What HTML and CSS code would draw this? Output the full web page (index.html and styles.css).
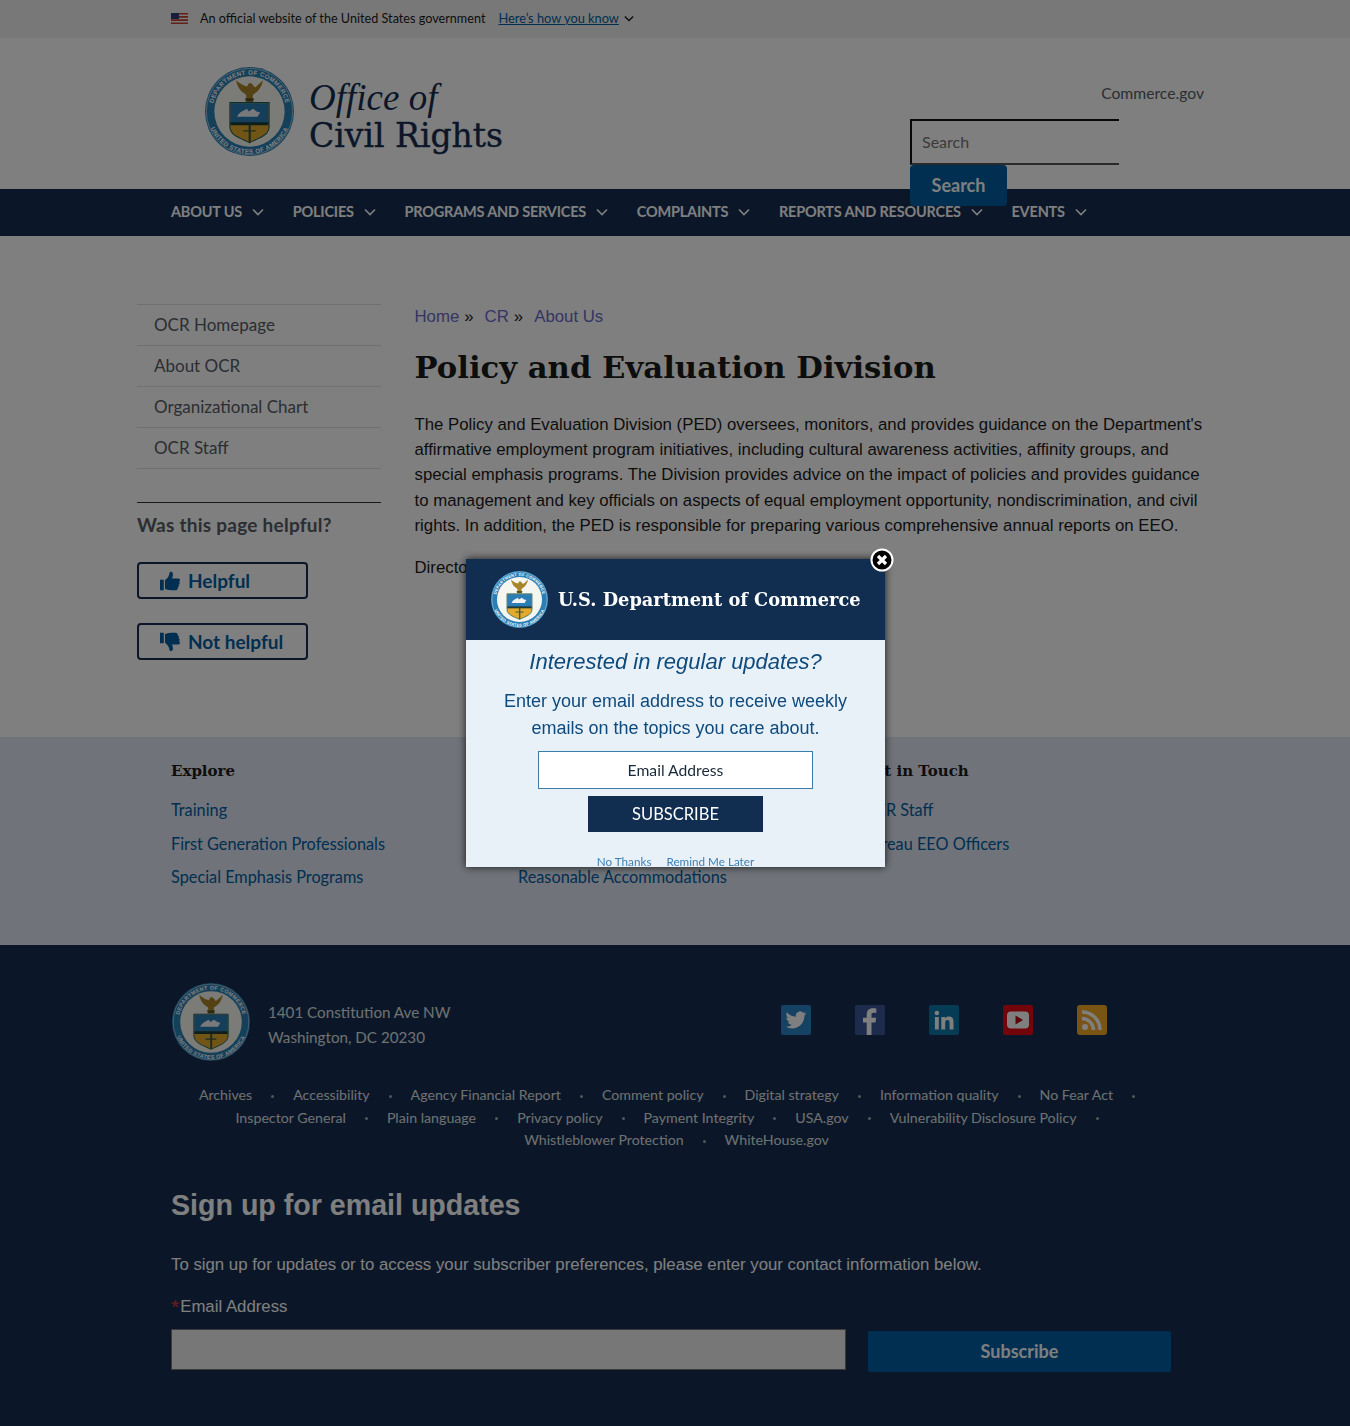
FILE: index.html
```html
<!DOCTYPE html>
<html lang="en">
<head>
    <meta charset="UTF-8">
    <meta name="viewport" content="width=device-width, initial-scale=1.0">
    <title>Policy and Evaluation Division | Office of Civil Rights</title>
    <link rel="stylesheet" href="styles.css">
</head>
<body>

<svg class="defs" width="0" height="0" aria-hidden="true">
    <defs>
        <path id="arc-top" d="M8.500 50a41.500 41.500 0 0 1 83 0"/>
        <path id="arc-bottom" d="M2.500 50a47.500 47.500 0 0 0 95 0"/>
    </defs>
    <symbol id="seal" viewBox="0 0 100 100">
        <circle cx="50" cy="50" r="50" fill="#2a80b5"/>
        <circle cx="50" cy="50" r="48.500" fill="none" stroke="#fff" stroke-width=".6"/>
        <circle cx="50" cy="50" r="39.500" fill="#f6f6f1"/>
        <path d="M35 15c1 7 5 13 11 16l1 7h6l1-7c6-3 10-9 11-16-4 4-7 7-9 8-1-2-3-4-5-5-2 0-3 2-3.500 4C43 21 39 19 35 15z" fill="#a8852a"/>
        <path d="M45 35h10l-1 4h-8z" fill="#5e4f1e"/>
        <path d="M28 40h44v27c0 10-12 13-22 18-10-5-22-8-22-18z" fill="#e3aa2e" stroke="#1e5f57" stroke-width="1.200"/>
        <path d="M28.600 40.600h42.800V64H28.600z" fill="#2a7db5"/>
        <path d="M36 56c3-6 8-7 11-9l2 3 5-3 4 3 4 1-3 5z" fill="#f1f3f4"/>
        <path d="M28.600 62h42.800v3.500H28.600z" fill="#1f3d36"/>
        <path d="M49 65h2.500v19H49zM43 71h14v1.600H43z" fill="#3c5a3a"/>
    </symbol>
    <symbol id="chevron" viewBox="0 0 12 8">
        <path d="M1 1.500 6 6.500l5-5" fill="none" stroke="currentColor" stroke-width="1.600"/>
    </symbol>
    <symbol id="thumb" viewBox="0 0 24 24">
        <path d="M0 10.500h4.500V23H0zM6 11c3-2 5-5 5.500-9 .2-1.500 3.800-1.500 4 1.500.1 2-.5 4-1 5.500H22c2.500 0 2.500 3.300.8 4 1.200 1 1 3-.5 3.500.7 1.200.3 2.800-1 3.200.3 1.500-.6 3.300-2.300 3.300h-6C10 23 8 22 6 21.500z" fill="currentColor"/>
    </symbol>
</svg>

<section class="gov-banner">
    <svg class="flag" viewBox="0 0 17 11" width="17" height="11">
        <rect width="17" height="11" fill="#f2f2f2"/>
        <path d="M0 0h17v1.600H0zM0 3.100h17v1.600H0zM0 6.300h17v1.600H0zM0 9.400h17V11H0z" fill="#c4402f"/>
        <rect width="8" height="6" fill="#2e3f7c"/>
    </svg>
    <span class="gov-text">An official website of the United States government</span>
    <a class="gov-link" href="#">Here’s how you know</a>
    <svg class="gov-chevron"><use href="#chevron"/></svg>
</section>

<header class="site-header">
    <a class="logo" href="#">
        <svg class="logo-seal" viewBox="0 0 100 100">
            <use href="#seal" width="100" height="100"/>
            <text class="seal-text"><textPath href="#arc-top" startOffset="50%" text-anchor="middle">DEPARTMENT OF COMMERCE</textPath></text>
            <text class="seal-text"><textPath href="#arc-bottom" startOffset="50%" text-anchor="middle">UNITED STATES OF AMERICA</textPath></text>
        </svg>
        <span class="logo-name"><em>Office of</em><br>Civil Rights</span>
    </a>
    <div class="header-right">
        <a class="commerce-link" href="#">Commerce.gov</a>
        <form class="search-form">
            <input class="search-input" type="text" placeholder="Search">
            <button class="search-btn" type="button">Search</button>
        </form>
    </div>
</header>

<nav class="main-nav">
    <a href="#">About Us <svg><use href="#chevron"/></svg></a>
    <a href="#">Policies <svg><use href="#chevron"/></svg></a>
    <a href="#">Programs and Services <svg><use href="#chevron"/></svg></a>
    <a href="#">Complaints <svg><use href="#chevron"/></svg></a>
    <a href="#">Reports and Resources <svg><use href="#chevron"/></svg></a>
    <a href="#">Events <svg><use href="#chevron"/></svg></a>
</nav>

<main class="page">
    <aside class="sidebar">
        <ul class="side-menu">
            <li><a href="#">OCR Homepage</a></li>
            <li><a href="#">About OCR</a></li>
            <li><a href="#">Organizational Chart</a></li>
            <li><a href="#">OCR Staff</a></li>
        </ul>
        <div class="helpful">
            <h2>Was this page helpful?</h2>
            <button type="button"><svg><use href="#thumb"/></svg>Helpful</button>
            <button type="button"><svg class="flip"><use href="#thumb"/></svg>Not helpful</button>
        </div>
    </aside>
    <article class="content">
        <div class="breadcrumb"><a href="#">Home</a><span>»</span><a href="#">CR</a><span>»</span><a href="#">About Us</a></div>
        <h1>Policy and Evaluation Division</h1>
        <p>The Policy and Evaluation Division (PED) oversees, monitors, and provides guidance on the Department's affirmative employment program initiatives, including cultural awareness activities, affinity groups, and special emphasis programs. The Division provides advice on the impact of policies and provides guidance to management and key officials on aspects of equal employment opportunity, nondiscrimination, and civil rights. In addition, the PED is responsible for preparing various comprehensive annual reports on EEO.</p>
        <p>Director</p>
    </article>
</main>

<section class="link-band">
    <div class="link-col">
        <h3>Explore</h3>
        <a href="#">Training</a>
        <a href="#">First Generation Professionals</a>
        <a href="#">Special Emphasis Programs</a>
    </div>
    <div class="link-col narrow">
        <h3>&nbsp;</h3>
        <a href="#">&nbsp;</a>
        <a href="#">&nbsp;</a>
        <a href="#">Reasonable Accommodations</a>
    </div>
    <div class="link-col">
        <h3>Get in Touch</h3>
        <a href="#">OCR Staff</a>
        <a href="#">Bureau EEO Officers</a>
    </div>
</section>

<footer class="site-footer">
    <div class="footer-top">
        <svg class="footer-seal" viewBox="0 0 100 100">
            <use href="#seal" width="100" height="100"/>
            <text class="seal-text"><textPath href="#arc-top" startOffset="50%" text-anchor="middle">DEPARTMENT OF COMMERCE</textPath></text>
            <text class="seal-text"><textPath href="#arc-bottom" startOffset="50%" text-anchor="middle">UNITED STATES OF AMERICA</textPath></text>
        </svg>
        <address>1401 Constitution Ave NW<br>Washington, DC 20230</address>
        <div class="social">
            <a href="#"><svg viewBox="0 0 30 30"><rect width="30" height="30" rx="2" fill="#2a82c7"/><path transform="translate(4.500 4.500) scale(.875)" fill="#fff" d="M23.953 4.570a10 10 0 0 1-2.825.775 4.958 4.958 0 0 0 2.163-2.723c-.951.555-2.005.959-3.127 1.184a4.920 4.920 0 0 0-8.384 4.482C7.690 8.095 4.067 6.130 1.640 3.162a4.822 4.822 0 0 0-.666 2.475c0 1.710.870 3.213 2.188 4.096a4.904 4.904 0 0 1-2.228-.616v.060a4.923 4.923 0 0 0 3.946 4.827 4.996 4.996 0 0 1-2.212.085 4.936 4.936 0 0 0 4.604 3.417 9.867 9.867 0 0 1-6.102 2.105c-.390 0-.779-.023-1.170-.067a13.995 13.995 0 0 0 7.557 2.209c9.053 0 13.998-7.496 13.998-13.985 0-.210 0-.420-.015-.630A9.935 9.935 0 0 0 24 4.590z"/></svg></a>
            <a href="#"><svg viewBox="0 0 30 30"><rect width="30" height="30" rx="2" fill="#3b5998"/><path fill="#fff" d="M16.500 30V17.500h4l.6-4.700h-4.600V10c0-1.400.4-2.300 2.300-2.300h2.500V3.500c-.4-.1-1.900-.2-3.600-.2-3.600 0-6 2.200-6 6.200v3.300H8v4.700h3.700V30z"/></svg></a>
            <a href="#"><svg viewBox="0 0 30 30"><rect width="30" height="30" rx="2" fill="#0b76a8"/><path transform="translate(2 2) scale(1.100)" fill="#fff" d="M20.447 20.452h-3.554v-5.569c0-1.328-.027-3.037-1.852-3.037-1.853 0-2.136 1.445-2.136 2.939v5.667H9.351V9h3.414v1.561h.046c.477-.9 1.637-1.850 3.370-1.850 3.601 0 4.267 2.370 4.267 5.455v6.286zM5.337 7.433a2.062 2.062 0 0 1-2.063-2.065 2.064 2.064 0 1 1 2.063 2.065zm1.782 13.019H3.555V9h3.564v11.452z"/></svg></a>
            <a href="#"><svg viewBox="0 0 30 30"><rect width="30" height="30" rx="2" fill="#e40a14"/><rect x="4" y="6.500" width="22" height="17" rx="4" fill="#fff"/><path d="M12.500 10.500v9l7.500-4.500z" fill="#b30f16"/></svg></a>
            <a href="#"><svg viewBox="0 0 30 30"><rect width="30" height="30" rx="3" fill="#f3ab29"/><circle cx="8" cy="22" r="3" fill="#fff"/><path d="M5 13.500a11.500 11.500 0 0 1 11.500 11.500M5 7a18 18 0 0 1 18 18" fill="none" stroke="#fff" stroke-width="3.400"/></svg></a>
        </div>
    </div>
    <div class="footer-links">
        <div class="link-row">
            <a href="#">Archives</a><a href="#">Accessibility</a><a href="#">Agency Financial Report</a><a href="#">Comment policy</a><a href="#">Digital strategy</a><a href="#">Information quality</a><a href="#">No Fear Act</a>
        </div>
        <div class="link-row">
            <a href="#">Inspector General</a><a href="#">Plain language</a><a href="#">Privacy policy</a><a href="#">Payment Integrity</a><a href="#">USA.gov</a><a href="#">Vulnerability Disclosure Policy</a>
        </div>
        <div class="link-row last">
            <a href="#">Whistleblower Protection</a><a href="#">WhiteHouse.gov</a>
        </div>
    </div>
    <div class="signup">
        <h2>Sign up for email updates</h2>
        <p>To sign up for updates or to access your subscriber preferences, please enter your contact information below.</p>
        <label for="signup-email"><span>*</span>Email Address</label>
        <div class="signup-row">
            <input id="signup-email" type="text">
            <button type="button">Subscribe</button>
        </div>
    </div>
</footer>

<div class="overlay"></div>
<div class="modal">
    <div class="modal-head">
        <svg class="modal-seal" viewBox="0 0 100 100">
            <use href="#seal" width="100" height="100"/>
            <text class="seal-text"><textPath href="#arc-top" startOffset="50%" text-anchor="middle">DEPARTMENT OF COMMERCE</textPath></text>
            <text class="seal-text"><textPath href="#arc-bottom" startOffset="50%" text-anchor="middle">UNITED STATES OF AMERICA</textPath></text>
        </svg>
        <span>U.S. Department of Commerce</span>
    </div>
    <div class="modal-body">
        <h2>Interested in regular updates?</h2>
        <p>Enter your email address to receive weekly emails on the topics you care about.</p>
        <input type="text" placeholder="Email Address">
        <button type="button">SUBSCRIBE</button>
        <div class="modal-links"><a href="#">No Thanks</a><a href="#">Remind Me Later</a></div>
    </div>
</div>
<button class="modal-close" type="button" aria-label="Close">
    <svg viewBox="0 0 24 24" width="24" height="24"><circle cx="12" cy="12" r="10.500" fill="#000" stroke="#fff" stroke-width="2"/><path d="M8 8l8 8M16 8l-8 8" stroke="#fff" stroke-width="3.200"/></svg>
</button>

</body>
</html>
```

FILE: styles.css
```css
* {
    box-sizing: border-box;
}

body {
    font-family: 'Lato', 'Noto Sans', sans-serif;
    color: #1b1b1b;
    background: #fff;
    margin: 0;
    min-height: 1426px;
}

a {
    text-decoration: none;
    color: inherit;
}

.defs {
    display: block;
    height: 0;
}

.seal-text {
    font-family: 'Liberation Sans', sans-serif;
    font-size: 7px;
    font-weight: bold;
    letter-spacing: 0.4px;
    fill: #fff;
}

/* gov banner */
.gov-banner {
    display: flex;
    align-items: center;
    height: 38px;
    padding: 0 0 2px 171px;
    background: #f0f0f0;
    font-size: 12.650px;
}

.gov-text {
    margin-left: 12px;
}

.gov-link {
    margin-left: 13px;
    font-size: 12.800px;
    color: #005ea2;
    text-decoration: underline;
}

.gov-chevron {
    width: 10px;
    height: 7px;
    margin-left: 5px;
    color: #1b1b1b;
}

/* header */
.site-header {
    display: flex;
    justify-content: space-between;
    height: 151px;
    padding: 29px 146px 0 205px;
}

.logo {
    display: flex;
    align-items: flex-start;
    color: #162e51;
}

.logo-seal {
    width: 89px;
    height: 89px;
}

.logo-name {
    margin: 12px 0 0 15px;
    font-family: 'DejaVu Serif', 'Liberation Serif', serif;
    font-size: 33px;
    line-height: 37px;
    -webkit-text-stroke: 0.4px #162e51;
}

.logo-name em {
    font-family: 'Liberation Serif', serif;
    font-size: 37px;
    -webkit-text-stroke: 0;
}

.header-right {
    position: relative;
    width: 294px;
}

.commerce-link {
    display: block;
    margin-top: 17px;
    text-align: right;
    font-size: 15.700px;
    color: #565c65;
}

.search-form {
    margin-top: 17px;
}

.search-input {
    display: block;
    width: 209px;
    height: 46px;
    padding: 0 10px 2px;
    border: 2px solid #111;
    border-right: 0;
    border-bottom-color: #555;
    background: transparent;
    font: 16px 'Lato', sans-serif;
}

.search-btn {
    position: relative;
    z-index: 1;
    display: block;
    width: 97px;
    height: 41px;
    padding-bottom: 2px;
    border: 0;
    border-radius: 4px;
    background: #005ea2;
    color: #fff;
    font: bold 18px 'Lato', sans-serif;
}

/* nav */
.main-nav {
    display: flex;
    align-items: center;
    gap: 28.700px;
    height: 47px;
    padding: 0 0 2px 171px;
    background: #162e51;
}

.main-nav a {
    display: flex;
    align-items: center;
    color: #fff;
    font-size: 14.500px;
    font-weight: bold;
    letter-spacing: -0.2px;
    text-transform: uppercase;
}

.main-nav svg {
    width: 12px;
    height: 8px;
    margin-left: 10px;
}

/* main */
.page {
    display: flex;
    padding: 68px 146px 77px 137px;
}

.sidebar {
    width: 244px;
    flex-shrink: 0;
}

.side-menu {
    list-style: none;
    margin: 0;
    padding: 0;
    border-top: 1px solid #dfe1e2;
}

.side-menu li {
    height: 41px;
    padding-left: 17px;
    border-bottom: 1px solid #dfe1e2;
    font-size: 17px;
    line-height: 39px;
    color: #565c65;
}

.helpful {
    margin-top: 33px;
    padding-top: 11px;
    border-top: 1px solid #333;
}

.helpful h2 {
    margin: 0 0 26px;
    font-size: 19px;
    letter-spacing: 0.25px;
    line-height: 22px;
    color: #565c65;
}

.helpful button {
    display: flex;
    align-items: center;
    width: 171px;
    height: 37px;
    margin-bottom: 24px;
    padding: 0 0 0 21px;
    border: 2px solid #162e51;
    border-radius: 4px;
    background: transparent;
    color: #005ea2;
    font: bold 19px 'Lato', sans-serif;
}

.helpful button:last-child {
    margin-bottom: 0;
}

.helpful svg {
    width: 20px;
    height: 20px;
    margin-right: 8px;
}

.helpful svg.flip {
    transform: scale(1, -1);
}

.content {
    flex: 1;
    margin-left: 33.500px;
    font-family: 'Liberation Sans', sans-serif;
    font-size: 16.800px;
    line-height: 25.200px;
}

.breadcrumb {
    display: flex;
}

.breadcrumb a {
    color: #6a6ac6;
}

.breadcrumb span {
    margin: 0 11px 0 5px;
}

.content h1 {
    margin: 18px 0 24.800px;
    font-family: 'DejaVu Serif', 'Liberation Serif', serif;
    font-size: 30.700px;
    line-height: 40px;
}

.content p {
    margin: 0 0 17px;
}

/* link band */
.link-band {
    display: flex;
    height: 208px;
    padding: 24px 0 0 171px;
    background: #e0e7f3;
}

.link-col {
    width: 347px;
}

.link-col.narrow {
    width: 344px;
}

.link-col h3 {
    margin: 0 0 12px;
    font-family: 'DejaVu Serif', 'Liberation Serif', serif;
    font-size: 15px;
    line-height: 20px;
}

.link-col a {
    display: block;
    font-size: 16.300px;
    line-height: 33.500px;
    color: #005ea2;
}

/* footer */
.site-footer {
    padding: 38px 180px 0 171px;
    min-height: 481px;
    background: #162e51;
    color: #fff;
}

.footer-top {
    display: flex;
    align-items: center;
}

.footer-seal {
    width: 78px;
    height: 78px;
    margin-left: 1px;
    flex-shrink: 0;
}

.footer-top address {
    margin: 6px 0 0 18px;
    font-style: normal;
    font-size: 15.200px;
    line-height: 25px;
    color: #dfe1e2;
}

.social {
    display: flex;
    gap: 44px;
    margin: -5px 63px 0 auto;
}

.social a,
.social svg {
    display: block;
    width: 30px;
    height: 30px;
}

.footer-links {
    margin: 23px 0 0 12px;
    font-size: 14.200px;
    line-height: 22.500px;
    color: #dfe1e2;
}

.link-row {
    display: flex;
    justify-content: center;
}

.link-row a {
    display: flex;
    align-items: center;
}

.link-row a::after {
    content: "";
    width: 3px;
    height: 3px;
    margin: 2px 19px 0;
    border-radius: 50%;
    background: #a9aeb1;
}

.link-row.last a:last-child::after {
    display: none;
}

.signup {
    width: 1000px;
    margin-top: 33px;
    font-family: 'Liberation Sans', sans-serif;
    color: #fff;
}

.signup h2 {
    margin: 0;
    font-size: 28.600px;
    line-height: 40px;
}

.signup p {
    margin: 30px 0 0;
    font-size: 16.800px;
    line-height: 20px;
}

.signup label {
    display: block;
    margin-top: 22px;
    font-size: 16.800px;
    line-height: 20px;
}

.signup label span {
    margin-right: 1px;
    font-size: 21px;
    line-height: 10px;
    vertical-align: -2px;
    color: #d83933;
}

.signup-row {
    display: flex;
    justify-content: space-between;
    margin-top: 12px;
}

.signup-row input {
    width: 675px;
    height: 41px;
    border: 1px solid #777;
    background: #eee;
}

.signup-row button {
    width: 303px;
    height: 41px;
    margin-top: 2px;
    border: 0;
    border-radius: 2px;
    background: #005ea2;
    color: #fff;
    font: bold 18px 'Lato', sans-serif;
}

/* modal */
.overlay {
    position: fixed;
    inset: 0;
    z-index: 2;
    background: rgba(0, 0, 0, 0.5);
}

.modal {
    position: fixed;
    left: 466px;
    top: 559px;
    z-index: 3;
    width: 419px;
    height: 308px;
    overflow: hidden;
    background: #e8f1f8;
    box-shadow: 0 0 8px rgba(0, 0, 0, 0.8);
}

.modal-head {
    display: flex;
    align-items: center;
    height: 81px;
    padding-left: 25px;
    background: #112e51;
    color: #fff;
    font-family: 'DejaVu Serif', 'Liberation Serif', serif;
    font-size: 17.800px;
    font-weight: bold;
}

.modal-seal {
    width: 57px;
    height: 57px;
    margin-right: 10px;
}

.modal-body {
    text-align: center;
    color: #0f4a7c;
    font-family: 'Liberation Sans', sans-serif;
}

.modal-body h2 {
    margin: 8px 0 0;
    font-size: 22px;
    font-style: italic;
    font-weight: normal;
    line-height: 28px;
}

.modal-body p {
    margin: 12px 30px 0;
    font-size: 18px;
    line-height: 27px;
}

.modal-body input {
    display: block;
    width: 275px;
    height: 38px;
    margin: 9px auto 0;
    border: 1px solid #3a7cab;
    background: #fff;
    text-align: center;
    font: 15.700px 'Lato', sans-serif;
}

.modal-body input::placeholder {
    color: #1b2a3a;
    opacity: 1;
}

.modal-body button {
    display: block;
    width: 175px;
    height: 36px;
    margin: 7px auto 0;
    border: 0;
    background: #112e51;
    color: #fff;
    font: 16.500px 'Lato', sans-serif;
}

.modal-links {
    display: flex;
    justify-content: center;
    gap: 15px;
    margin-top: 23px;
    font: 11.700px/12px 'Lato', sans-serif;
    color: #3e7fb4;
}

.modal-close {
    position: fixed;
    left: 870px;
    top: 548px;
    z-index: 4;
    width: 24px;
    height: 24px;
    padding: 0;
    border: 0;
    background: none;
}
```
